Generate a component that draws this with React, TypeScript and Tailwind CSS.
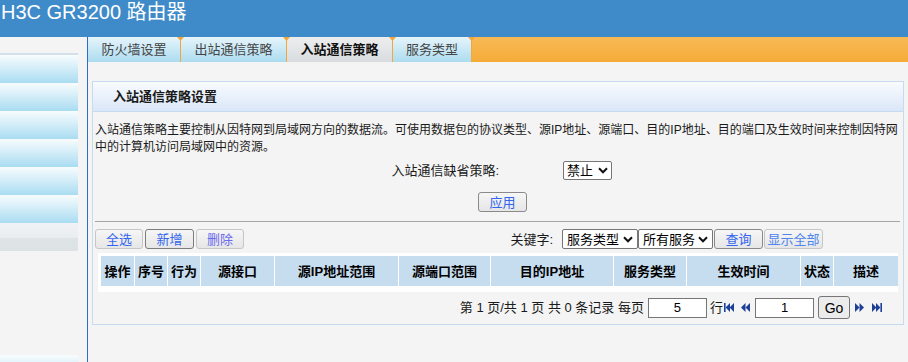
import React from "react";

const FONT = "font-['Liberation_Sans','Noto_Sans_CJK_SC',sans-serif]";

function Chevron() {
  return (
    <svg width="10" height="7" viewBox="0 0 10 7" className="shrink-0">
      <path d="M1 1.3 L5 5.3 L9 1.3" fill="none" stroke="#111" strokeWidth="2" />
    </svg>
  );
}

function FakeSelect({ label, w }: { label: string; w: string }) {
  return (
    <div
      className={`flex items-center justify-between ${w} h-[20px] border border-[#767676] rounded-[2px] bg-white pl-[4px] pr-[4px] text-[13px] text-black leading-none`}
    >
      <span>{label}</span>
      <Chevron />
    </div>
  );
}

function Btn({ label, w, border, color }: { label: string; w: string; border: string; color: string }) {
  return (
    <div
      className={`flex items-center justify-center ${w} h-[20px] border ${border} rounded-[3px] bg-linear-to-b from-[#f6f6f6] to-[#e6e6e6] text-[13px] ${color} leading-none`}
    >
      {label}
    </div>
  );
}

function FirstIcon() {
  return (
    <svg width="10" height="9" viewBox="0 0 10 9" className="shrink-0">
      <rect x="0" y="0" width="1.6" height="9" fill="#1d3f98" />
      <polygon points="6,0 1.6,4.5 6,9" fill="#1d3f98" />
      <polygon points="10,0 5.6,4.5 10,9" fill="#1d3f98" />
    </svg>
  );
}
function PrevIcon() {
  return (
    <svg width="9" height="9" viewBox="0 0 9 9" className="shrink-0">
      <polygon points="4.5,0 0,4.5 4.5,9" fill="#1d3f98" />
      <polygon points="9,0 4.5,4.5 9,9" fill="#1d3f98" />
    </svg>
  );
}
function NextIcon() {
  return (
    <svg width="9" height="9" viewBox="0 0 9 9" className="shrink-0">
      <polygon points="0,0 4.5,4.5 0,9" fill="#1d3f98" />
      <polygon points="4.5,0 9,4.5 4.5,9" fill="#1d3f98" />
    </svg>
  );
}
function LastIcon() {
  return (
    <svg width="10" height="9" viewBox="0 0 10 9" className="shrink-0">
      <polygon points="0,0 4.4,4.5 0,9" fill="#1d3f98" />
      <polygon points="4,0 8.4,4.5 4,9" fill="#1d3f98" />
      <rect x="8.4" y="0" width="1.6" height="9" fill="#1d3f98" />
    </svg>
  );
}

function Sep() {
  return (
    <div className="relative w-[1px] h-full bg-[#f1a73a] shrink-0">
      <svg width="7" height="4" viewBox="0 0 7 4" className="absolute top-0 left-[-3px]">
        <polygon points="0,0 7,0 3.5,4" fill="#f1a73a" />
      </svg>
    </div>
  );
}

const cols: { t: string; w: string }[] = [
  { t: "操作", w: "w-[33px]" },
  { t: "序号", w: "w-[32px]" },
  { t: "行为", w: "w-[32px]" },
  { t: "源接口", w: "w-[73px]" },
  { t: "源IP地址范围", w: "w-[123px]" },
  { t: "源端口范围", w: "w-[91px]" },
  { t: "目的IP地址", w: "w-[122px]" },
  { t: "服务类型", w: "w-[72px]" },
  { t: "生效时间", w: "w-[113px]" },
  { t: "状态", w: "w-[32px]" },
  { t: "描述", w: "w-[64px]" },
];

export default function App() {
  return (
    <div className={`w-[908px] h-[362px] overflow-hidden bg-[#f4f4f4] ${FONT}`}>
      <header className="h-[37px] bg-[#3f8bc9] text-white text-[20px] leading-[23px] pt-[1px] pl-[1px] whitespace-nowrap">
        H3C GR3200 路由器
      </header>
      <div className="flex h-[325px]">
        <aside className="w-[88px] shrink-0 border-r border-[#2b6fc7] flex flex-col pt-[16px] overflow-hidden">
          <div className="w-[78px] h-[2px] bg-[#d3dfe9] shrink-0" />
          {[0, 1, 2, 3, 4, 5].map((i) => (
            <div key={i} className="w-[78px] h-[28px] shrink-0 bg-linear-to-b from-[#f8fcfe] to-[#a9dcf1]" />
          ))}
          <div className="w-[78px] h-[28px] shrink-0 bg-[linear-gradient(#f0f3f5_0%,#e9edf0_52%,#dee3e6_54%,#dde2e5_100%)]" />
          <div className="h-[104px] shrink-0" />
          <div className="w-[78px] h-[28px] shrink-0 bg-linear-to-b from-[#f8fcfe] to-[#a9dcf1]" />
        </aside>
        <main className="flex-1 flex flex-col min-w-0">
          <div className="flex h-[25px] shrink-0 text-[13px] leading-none">
            <div className="w-[92px] flex items-center justify-center bg-linear-to-b from-[#e6f4fb] to-[#acdcf0] text-[#444]">
              防火墙设置
            </div>
            <Sep />
            <div className="w-[105px] flex items-center justify-center bg-linear-to-b from-[#e6f4fb] to-[#acdcf0] text-[#444]">
              出站通信策略
            </div>
            <Sep />
            <div className="w-[105px] flex items-center justify-center bg-linear-to-b from-[#eeeeee] to-[#d8dce0] text-[#111] font-bold">
              入站通信策略
            </div>
            <Sep />
            <div className="w-[78px] flex items-center justify-center bg-linear-to-b from-[#e6f4fb] to-[#acdcf0] text-[#444]">
              服务类型
            </div>
            <Sep />
            <div className="flex-1 bg-linear-to-b from-[#f8b955] to-[#f5ac37]" />
          </div>

          <div className="mt-[19px] mx-[4px] h-[244px] border border-[#c6dbf0] flex flex-col">
            <div className="h-[30px] shrink-0 border-b border-[#c6dbf0] bg-linear-to-b from-[#f9fbfe] to-[#dae7f8] flex items-center pl-[20px] text-[13px] font-bold text-[#1a1a1a]">
              入站通信策略设置
            </div>
            <div className="flex flex-col pl-[2px] pr-[3px]">
              <div className="mt-[10px] text-[12px] leading-[17px] text-[#1a1a1a] whitespace-nowrap">
                入站通信策略主要控制从因特网到局域网方向的数据流。可使用数据包的协议类型、源IP地址、源端口、目的IP地址、目的端口及生效时间来控制因特网
                <br />
                中的计算机访问局域网中的资源。
              </div>
              <div className="mt-[5px] h-[19px] flex items-center">
                <div className="w-[404px] text-right text-[13px] text-[#1a1a1a] leading-none">入站通信缺省策略:</div>
                <div className="ml-[64px]">
                  <div className="flex items-center justify-between w-[49px] h-[19px] border border-[#767676] rounded-[2px] bg-white pl-[3px] pr-[3px] text-[13px] text-black leading-none">
                    <span>禁止</span>
                    <Chevron />
                  </div>
                </div>
              </div>
              <div className="mt-[12px] ml-[383px] flex">
                <div className="flex items-center justify-center w-[49px] h-[20px] border border-[#8a8a8a] rounded-[3px] bg-linear-to-b from-[#f6f6f6] to-[#e6e6e6] text-[13px] text-[#3366ee] leading-none">
                  应用
                </div>
              </div>
              <div className="mt-[9px] h-[1px] bg-[#a5a5a5]" />
              <div className="mt-[7px] h-[20px] flex items-center justify-between pr-[77px]">
                <div className="flex gap-[2px]">
                  <Btn label="全选" w="w-[48px]" border="border-[#c6c6c6]" color="text-[#3366ee]" />
                  <Btn label="新增" w="w-[49px]" border="border-[#7c7c7c]" color="text-[#3366ee]" />
                  <Btn label="删除" w="w-[48px]" border="border-[#c6c6c6]" color="text-[#6a6aee]" />
                </div>
                <div className="flex items-center">
                  <span className="text-[13px] text-[#1a1a1a] leading-none mr-[9px]">关键字:</span>
                  <FakeSelect label="服务类型" w="w-[76px]" />
                  <FakeSelect label="所有服务" w="w-[75px]" />
                  <div className="ml-[1px]">
                    <Btn label="查询" w="w-[49px]" border="border-[#8a8a8a]" color="text-[#3366ee]" />
                  </div>
                  <div className="ml-[1px]">
                    <Btn label="显示全部" w="w-[59px]" border="border-[#c6c6c6]" color="text-[#4d86ee]" />
                  </div>
                </div>
              </div>
              <div className="mt-[4px] ml-[3px] w-[800px] h-[39px] bg-white pt-[3px] pl-[3px]">
                <div className="flex gap-[1px] h-[30px]">
                  {cols.map((c) => (
                    <div
                      key={c.t}
                      className={`${c.w} shrink-0 bg-[#c6dcef] flex items-center justify-center text-[13px] font-bold text-black whitespace-nowrap leading-none`}
                    >
                      {c.t}
                    </div>
                  ))}
                </div>
              </div>
              <div className="mt-[4px] h-[23px] flex items-center justify-end pr-[18px] text-[13px] text-[#1a1a1a] leading-none">
                <span className="whitespace-nowrap">第 1 页/共 1 页 共 0 条记录 每页</span>
                <div className="ml-[4px] w-[59px] h-[20px] border border-[#767676] bg-white flex items-center justify-center text-black">
                  5
                </div>
                <span className="ml-[3px]">行</span>
                <div className="ml-[1px] flex">
                  <FirstIcon />
                </div>
                <div className="ml-[7px] flex">
                  <PrevIcon />
                </div>
                <div className="ml-[5px] w-[59px] h-[20px] border border-[#767676] bg-white flex items-center justify-center text-black">
                  1
                </div>
                <div className="ml-[4px] w-[32px] h-[23px] border border-[#767676] rounded-[3px] bg-[#ececec] flex items-center justify-center text-black text-[14px]">
                  Go
                </div>
                <div className="ml-[5px] flex">
                  <NextIcon />
                </div>
                <div className="ml-[8px] flex">
                  <LastIcon />
                </div>
              </div>
            </div>
          </div>
        </main>
      </div>
    </div>
  );
}
